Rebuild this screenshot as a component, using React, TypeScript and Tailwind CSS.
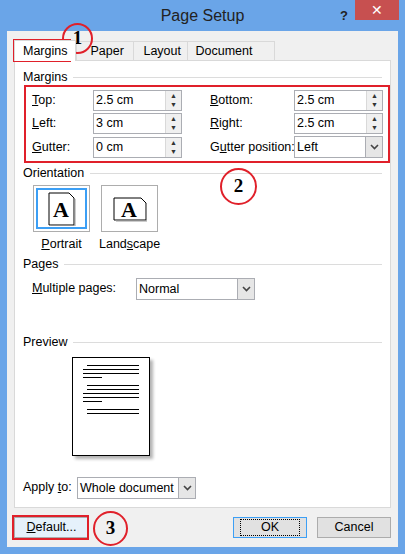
import React from 'react';

const font = { fontFamily: '"Liberation Sans", Arial, sans-serif' };

const Spin: React.FC<{ value: string }> = ({ value }) => (
    <div className="flex h-[21px] w-[89px] border border-[#abadb3] bg-white">
        <div className="flex-1 pl-[2px] leading-[19px]">{value}</div>
        <div className="flex w-[16px] flex-col border-l border-[#d9d9d9] bg-[#f0f0f0] text-[7px] leading-[9px] text-center text-[#333]">
            <span>▲</span>
            <span>▼</span>
        </div>
    </div>
);

const Select: React.FC<{ value: string; w: string }> = ({ value, w }) => (
    <div className={`flex h-[22px] ${w} border border-[#abadb3] bg-white`}>
        <div className="flex-1 pl-[2px] leading-[20px]">{value}</div>
        <div className="flex w-[17px] items-center justify-center border-l border-[#abadb3] bg-[#e6e6e6]">
            <svg width="9" height="6" viewBox="0 0 9 6"><path d="M1 1 L4.5 4.5 L8 1" stroke="#444" strokeWidth="1.6" fill="none" /></svg>
        </div>
    </div>
);

const U: React.FC<{ c: string }> = ({ c }) => <span className="underline">{c}</span>;

const Section: React.FC<{ title: string }> = ({ title }) => (
    <div className="flex h-[14px] items-center gap-[6px]">
        <span>{title}</span>
        <div className="h-px flex-1 bg-[#dcdcdc]" />
    </div>
);

const PageIcon: React.FC<{ landscape?: boolean }> = ({ landscape }) => (
    <svg width="34" height="34" viewBox="0 0 34 34">
        <path d={landscape ? 'M1 6 H28 L33 11 V28 H1 Z' : 'M4 1 H24 L29 6 V33 H4 Z'} fill="white" stroke="black" strokeWidth="1" />
        <path d={landscape ? 'M3 28 V29 H34 V12' : 'M5 33 V34 H30 V7'} fill="none" stroke="#999" strokeWidth="1" />
        <text x={landscape ? 16 : 16} y={landscape ? 25 : 25} fontSize="22" fontWeight="bold" textAnchor="middle" fontFamily="Liberation Serif, serif">A</text>
    </svg>
);

const Circle: React.FC<{ n: string; cls: string }> = ({ n, cls }) => (
    <div className={`absolute flex items-center justify-center rounded-full border-2 border-[#e0202a] font-bold text-[19px] ${cls}`} style={{ fontFamily: '"Liberation Serif", serif' }}>
        {n}
    </div>
);

export default function App() {
    return (
        <div className="relative h-[554px] w-[405px] bg-[#6aa5e8] text-[12.5px] text-black" style={font}>
            {/* title bar */}
            <div className="relative h-[31px] text-center text-[16px] leading-[31px] text-[#222]">
                Page Setup
                <span className="absolute right-[57px] top-0 text-[13px] font-bold">?</span>
                <div className="absolute right-[6px] top-0 flex h-[20px] w-[44px] items-center justify-center bg-[#c75050] text-[14px] leading-none text-white">✕</div>
            </div>
            <div className="mx-[7px] flex h-[516px] flex-col bg-[#f0f0f0] px-[7px] pt-[9px]">
                {/* tabs */}
                <div className="flex h-[20px] items-end">
                    <div className="z-10 -mb-px h-[21px] border border-b-0 border-[#d9d9d9] bg-white px-[8px] leading-[20px]">Margins</div>
                    <div className="h-[19px] w-[58px] border border-b-0 border-[#d9d9d9] pl-[13px] leading-[18px]">Paper</div>
                    <div className="h-[19px] w-[54px] border border-b-0 border-l-0 border-[#d9d9d9] pl-[9px] leading-[18px]">Layout</div>
                    <div className="h-[19px] w-[87px] border border-b-0 border-l-0 border-[#d9d9d9] pl-[7px] leading-[18px]">Document Grid</div>
                </div>
                <div className="flex h-[448px] flex-col border border-[#d9d9d9] bg-white px-[8px] pt-[9px]">
                    <Section title="Margins" />
                    <div className="mt-[6px] grid grid-cols-[61px_107px_94px_89px] items-center gap-y-[2px] pl-[9px]">
                        <span><U c="T" />op:</span><Spin value="2.5 cm" />
                        <span className="pl-[10px]"><U c="B" />ottom:</span><Spin value="2.5 cm" />
                        <span><U c="L" />eft:</span><Spin value="3 cm" />
                        <span className="pl-[10px]"><U c="R" />ight:</span><Spin value="2.5 cm" />
                        <span><U c="G" />utter:</span><Spin value="0 cm" />
                        <span className="pl-[10px] whitespace-nowrap">G<U c="u" />tter position:</span><Select value="Left" w="w-[89px]" />
                    </div>
                    <div className="mt-[8px]"><Section title="Orientation" /></div>
                    <div className="mt-[5px] flex gap-[9px] pl-[10px]">
                        <div className="flex flex-col items-center">
                            <div className="flex h-[47px] w-[57px] items-center justify-center border border-[#adadad] p-[2px]">
                                <div className="flex h-full w-full items-center justify-center border-2 border-[#3c9ff5]"><PageIcon /></div>
                            </div>
                            <span className="mt-[3px]"><U c="P" />ortrait</span>
                        </div>
                        <div className="flex flex-col items-center">
                            <div className="flex h-[47px] w-[57px] items-center justify-center border border-[#adadad]"><PageIcon landscape /></div>
                            <span className="mt-[3px]">Land<U c="s" />cape</span>
                        </div>
                    </div>
                    <div className="mt-[4px]"><Section title="Pages" /></div>
                    <div className="mt-[6px] flex items-center pl-[9px]">
                        <span className="w-[104px]"><U c="M" />ultiple pages:</span>
                        <Select value="Normal" w="w-[119px]" />
                    </div>
                    <div className="mt-[36px]"><Section title="Preview" /></div>
                    <div className="ml-[49px] mt-[7px] flex h-[99px] w-[78px] flex-col border border-black bg-white px-[10px] pt-[4px] shadow-[3px_3px_3px_rgba(0,0,0,0.3)]">
                        {[1, 0, 0, 2, 3, 1, 0, 0, 2, 3, 1].map((k, i) => (
                            <div key={i} className={`mt-[3px] h-[1px] bg-black ${k === 1 ? 'ml-[4px]' : ''} ${k === 2 ? 'w-[19px]' : ''} ${k === 3 ? 'mt-[7px] ml-[4px]' : ''}`} />
                        ))}
                    </div>
                    <div className="mt-[21px] flex items-center">
                        <span className="w-[54px]">Apply <U c="t" />o:</span>
                        <Select value="Whole document" w="w-[119px]" />
                    </div>
                </div>
                <div className="mt-[9px] flex h-[21px] items-center">
                    <div className="flex h-[21px] w-[75px] items-center justify-center border border-[#acacac] bg-[#e5f1fb]"><U c="D" />efault...</div>
                    <div className="flex-1" />
                    <div className="flex h-[21px] w-[74px] items-center justify-center border border-[#3c9ff5] bg-[#e1e1e1]">
                        <span className="border border-dotted border-black px-[20px] leading-[15px]">OK</span>
                    </div>
                    <div className="ml-[10px] flex h-[21px] w-[74px] items-center justify-center border border-[#acacac] bg-[#e1e1e1]">Cancel</div>
                </div>
            </div>
            {/* annotations */}
            <div className="absolute left-[13px] top-[39px] h-[23px] w-[58px] border-2 border-[#e0202a]" />
            <div className="absolute left-[24px] top-[85px] h-[78px] w-[366px] border-2 border-[#e0202a]" />
            <div className="absolute left-[12px] top-[515px] h-[25px] w-[77px] border-2 border-[#e0202a]" />
            <Circle n="1" cls="left-[62px] top-[23px] h-[31px] w-[31px]" />
            <Circle n="2" cls="left-[220px] top-[168px] h-[37px] w-[37px]" />
            <Circle n="3" cls="left-[93px] top-[511px] h-[35px] w-[35px]" />
        </div>
    );
}
